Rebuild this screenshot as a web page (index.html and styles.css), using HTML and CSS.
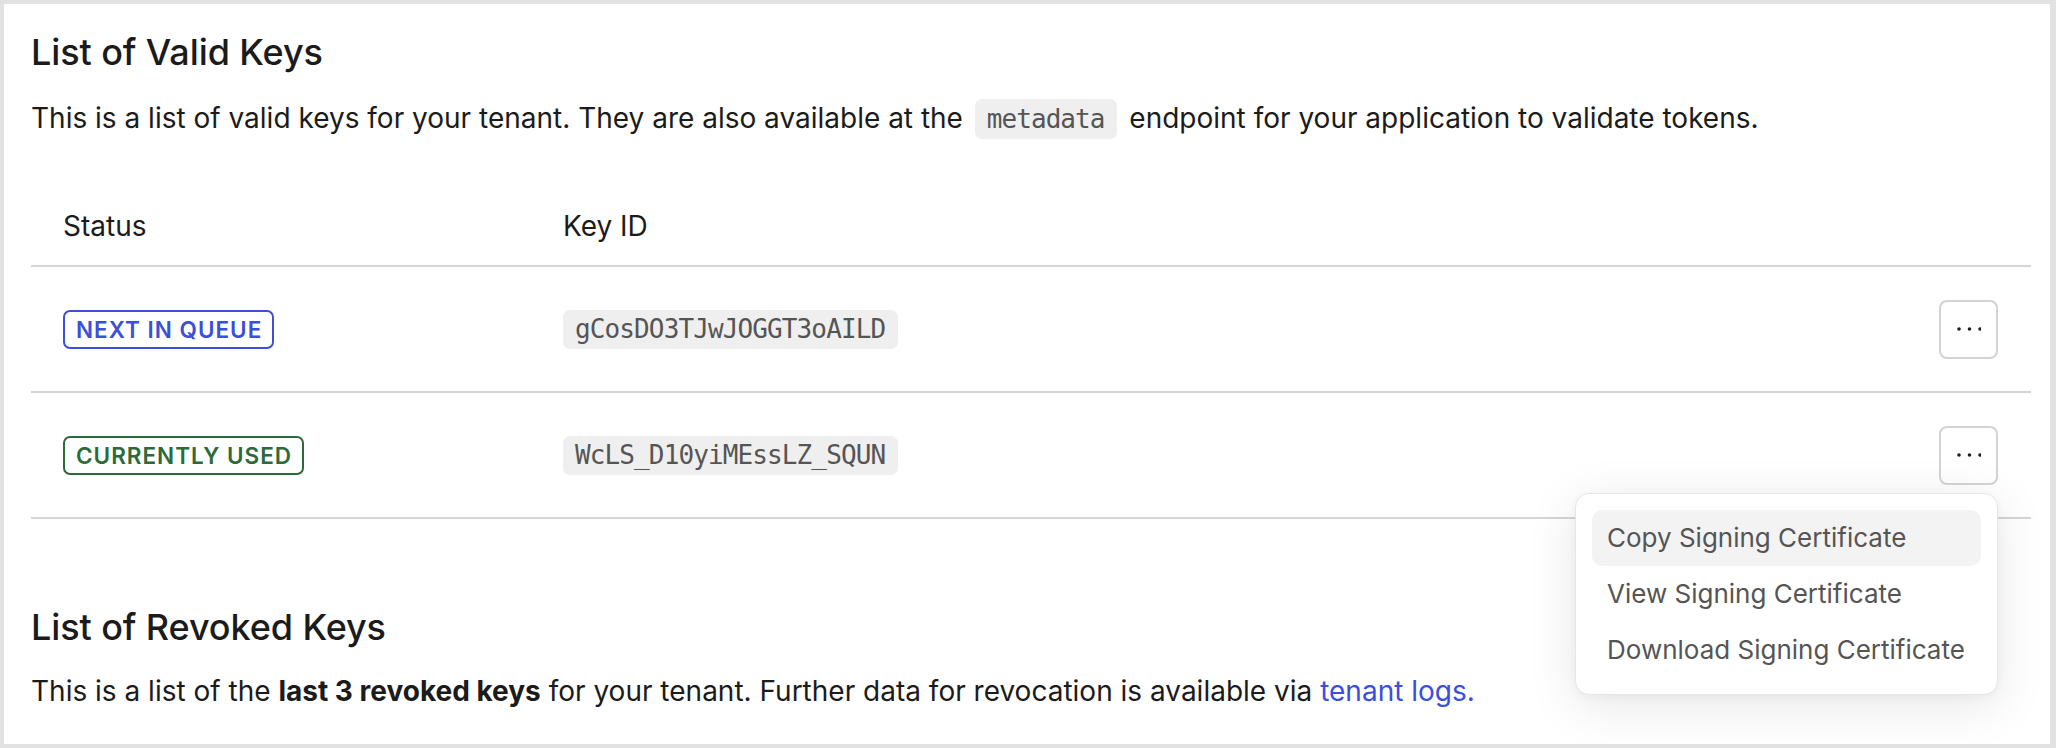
FILE: index.html
```html
<!DOCTYPE html>
<html lang="en">
<head>
<meta charset="utf-8">
<title>Signing Keys</title>
<link rel="stylesheet" href="styles.css">
</head>
<body>
<div class="frame">
  <section class="panel">
    <h2 class="title">List of Valid Keys</h2>
    <p class="desc">This is a list of valid keys for your tenant. They are also available at the <code class="code">metadata</code> endpoint for your application to validate tokens.</p>

    <div class="table">
      <div class="row head">
        <div class="cell c-status">Status</div>
        <div class="cell c-key">Key ID</div>
        <div class="cell c-act"></div>
      </div>
      <div class="row">
        <div class="cell c-status"><span class="badge badge-next">Next in queue</span></div>
        <div class="cell c-key"><span class="keypill">gCosDO3TJwJOGGT3oAILD</span></div>
        <div class="cell c-act">
          <div class="act-wrap">
            <button class="more" type="button" aria-label="More">
              <svg width="24" height="6" viewBox="0 0 24 6"><circle cx="2" cy="3" r="1.8"/><circle cx="12.5" cy="3" r="1.8"/><circle cx="23" cy="3" r="1.8"/></svg>
            </button>
          </div>
        </div>
      </div>
      <div class="row">
        <div class="cell c-status"><span class="badge badge-used">Currently used</span></div>
        <div class="cell c-key"><span class="keypill">WcLS_D10yiMEssLZ_SQUN</span></div>
        <div class="cell c-act">
          <div class="act-wrap">
            <button class="more" type="button" aria-label="More">
              <svg width="24" height="6" viewBox="0 0 24 6"><circle cx="2" cy="3" r="1.8"/><circle cx="12.5" cy="3" r="1.8"/><circle cx="23" cy="3" r="1.8"/></svg>
            </button>
            <ul class="menu">
              <li class="menu-item active">Copy Signing Certificate</li>
              <li class="menu-item">View Signing Certificate</li>
              <li class="menu-item">Download Signing Certificate</li>
            </ul>
          </div>
        </div>
      </div>
    </div>

    <h2 class="title title-2">List of Revoked Keys</h2>
    <p class="desc">This is a list of the <strong>last 3 revoked keys</strong> for your tenant. Further data for revocation is available via <a class="link" href="#">tenant logs.</a></p>
  </section>
</div>
</body>
</html>
```

FILE: styles.css
```css
* { box-sizing: border-box; }

html, body {
  margin: 0;
  padding: 0;
  height: 748px;
  overflow: hidden;
  background: #e2e2e2;
}

body {
  font-family: Inter, "Noto Sans", sans-serif;
  color: #1b1b1b;
}

.frame {
  padding: 4px 6px 4px 4px;
  height: 748px;
}

.panel {
  background: #ffffff;
  height: 740px;
  padding: 26px 19px 0 27px;
  overflow: hidden;
}

.title {
  margin: 0;
  font-size: 36px;
  line-height: 44px;
  font-weight: 500;
  letter-spacing: -0.1px;
}

.title-2 {
  margin-top: 86px;
}

.desc {
  margin: 24px 0 0;
  font-size: 28px;
  line-height: 40px;
  font-weight: 400;
}

.title-2 + .desc {
  margin-top: 22px;
}

.code {
  font-family: "DejaVu Sans Mono", "Liberation Mono", monospace;
  font-size: 26px;
  letter-spacing: -0.95px;
  color: #555555;
  background: #efefef;
  border-radius: 7px;
  padding: 5px 13px 5px 12px;
  margin: 0 4px;
}

.desc strong { font-weight: 700; }

.link {
  color: #3b4ee0;
  text-decoration: none;
}

.table {
  margin-top: 48px;
}

.row {
  display: grid;
  grid-template-columns: 532px 1fr 140px;
  align-items: center;
  height: 126px;
  border-bottom: 2px solid #d5d5d5;
}

.row.head {
  height: 80px;
  font-size: 28px;
}

.c-status { padding-left: 32px; }

.c-act {
  display: flex;
  justify-content: flex-end;
  padding-right: 33px;
}

.badge {
  display: inline-block;
  height: 39px;
  line-height: 35px;
  padding: 0 10px 0 11px;
  border: 2px solid currentColor;
  border-radius: 7px;
  font-size: 22.5px;
  font-weight: 600;
  letter-spacing: 1px;
  text-transform: uppercase;
}

.badge-next { color: #3c4fd9; }
.badge-used { color: #2b6a39; }

.keypill {
  display: inline-block;
  font-family: "DejaVu Sans Mono", "Liberation Mono", monospace;
  font-size: 26px;
  letter-spacing: -0.88px;
  line-height: 27px;
  padding: 6px 13px 6px 12px;
  color: #555555;
  background: #efefef;
  border-radius: 7px;
}

.act-wrap {
  position: relative;
}

.more {
  display: flex;
  align-items: center;
  justify-content: center;
  width: 59px;
  height: 59px;
  padding: 0;
  background: #ffffff;
  border: 2px solid #d3d3d3;
  border-radius: 8px;
}

.more svg { fill: #1e1e1e; display: block; }

.menu {
  position: absolute;
  top: calc(100% + 8px);
  right: 0;
  width: 423px;
  margin: 0;
  padding: 16px;
  list-style: none;
  background: #ffffff;
  border: 1px solid #e6e6e6;
  border-radius: 14px;
  box-shadow: 0 10px 50px rgba(0, 0, 0, 0.10), 0 2px 8px rgba(0, 0, 0, 0.04);
  z-index: 10;
}

.menu-item {
  height: 56px;
  line-height: 56px;
  padding: 0 15px;
  border-radius: 10px;
  font-size: 26px;
  color: #555555;
  white-space: nowrap;
}

.menu-item.active { background: #f3f3f3; }
```
